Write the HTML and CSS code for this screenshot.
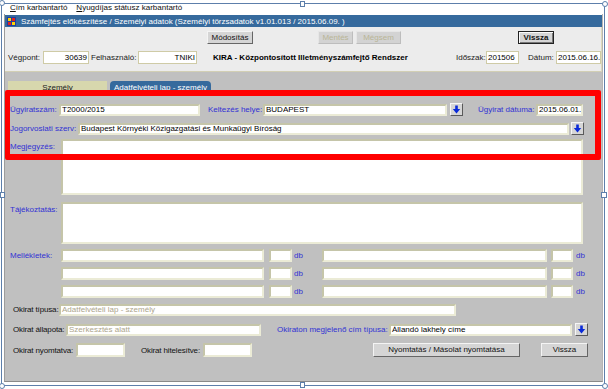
FILE: index.html
```html
<!DOCTYPE html>
<html lang="hu">
<head>
<meta charset="utf-8">
<title>KIRA</title>
<link rel="stylesheet" href="styles.css">
</head>
<body>
<div class="menu"><span><u>C</u>ím karbantartó</span><span><u>N</u>yugdíjas státusz karbantartó</span></div>
<div class="window">
  <div class="titlebar">
    <svg class="ticon" width="9" height="9" viewBox="0 0 9 9"><rect x="0" y="0" width="9" height="9" fill="#1f3f9f"/><rect x="1" y="1" width="3" height="3" fill="#ffd400"/><rect x="5" y="1" width="3" height="3" fill="#e02020"/><rect x="1" y="5" width="3" height="3" fill="#e02020"/><rect x="5" y="5" width="3" height="3" fill="#ffd400"/></svg>
    <span>Számfejtés előkészítése / Személyi adatok (Személyi törzsadatok v1.01.013 / 2015.06.09. )</span>
  </div>
  <div class="toolbar">
    <div class="btnrow">
      <div class="btn b-mod">Módosítás</div>
      <div class="btn dis b-ment">Mentés</div>
      <div class="btn dis b-megs">Mégsem</div>
      <div class="btn focus b-vissza">Vissza</div>
    </div>
    <div class="inforow">
      <div class="tl l-veg">Végpont:</div>
      <div class="tin r w46">30639</div>
      <div class="tl l-felh">Felhasználó:</div>
      <div class="tin r w59">TNIKI</div>
      <div class="kira">KIRA - Központosított Illetményszámfejtő Rendszer</div>
      <div class="tl l-idosz">Időszak:</div>
      <div class="tin w33">201506</div>
      <div class="tl l-datum">Dátum:</div>
      <div class="tin w45">2015.06.16.</div>
    </div>
  </div>
  <div class="content">
    <div class="tabs">
      <div class="tab tab-szem">Személy</div>
      <div class="tab tab-act">Adatfelvételi lap - személy</div>
    </div>
    <div class="form">
      <div class="row r1">
        <div class="lb w49">Ügyiratszám:</div>
        <div class="in w141">T2000/2015</div>
        <div class="lb ml8 w55">Keltezés helye:</div>
        <div class="in w184">BUDAPEST</div>
        <div class="dd ml3"><svg width="9" height="9" viewBox="0 0 9 9"><rect x="3.2" y="0.5" width="2.6" height="4" fill="#0a2ad8"/><polygon points="0.8,4 8.2,4 4.5,8.6" fill="#0a2ad8"/></svg></div>
        <div class="lb ml15 w58">Ügyirat dátuma:</div>
        <div class="in w47">2015.06.01.</div>
      </div>
      <div class="row r2">
        <div class="lb w68">Jogorvoslati szerv:</div>
        <div class="in w491">Budapest Környéki Közigazgatási és Munkaügyi Bíróság</div>
        <div class="dd ml2"><svg width="9" height="9" viewBox="0 0 9 9"><rect x="3.2" y="0.5" width="2.6" height="4" fill="#0a2ad8"/><polygon points="0.8,4 8.2,4 4.5,8.6" fill="#0a2ad8"/></svg></div>
      </div>
      <div class="row memo m1">
        <div class="lb w51 top">Megjegyzés:</div>
        <div class="in area w522"></div>
      </div>
      <div class="row memo m2">
        <div class="lb w51 top">Tájékoztatás:</div>
        <div class="in area w522"></div>
      </div>
      <div class="row mell">
        <div class="lb w51">Mellékletek:</div>
        <div class="in w203"></div>
        <div class="in ml5 w23"></div>
        <div class="db w30">db</div>
        <div class="in w225"></div>
        <div class="in ml4 w22"></div>
        <div class="db db2">db</div>
      </div>
      <div class="row mell">
        <div class="w51"></div>
        <div class="in w203"></div>
        <div class="in ml5 w23"></div>
        <div class="db w30">db</div>
        <div class="in w225"></div>
        <div class="in ml4 w22"></div>
        <div class="db db2">db</div>
      </div>
      <div class="row mell">
        <div class="w51"></div>
        <div class="in w203"></div>
        <div class="in ml5 w23"></div>
        <div class="db w30">db</div>
        <div class="in w225"></div>
        <div class="in ml4 w22"></div>
        <div class="db db2">db</div>
      </div>
      <div class="row r-tip">
        <div class="bl w49">Okirat típusa:</div>
        <div class="in grey w397">Adatfelvételi lap - személy</div>
      </div>
      <div class="row r-all">
        <div class="bl w56">Okirat állapota:</div>
        <div class="in grey w195">Szerkesztés alatt</div>
        <div class="lb ml16 w112">Okiraton megjelenő cím típusa:</div>
        <div class="in w183">Állandó lakhely címe</div>
        <div class="dd ml3"><svg width="9" height="9" viewBox="0 0 9 9"><rect x="3.2" y="0.5" width="2.6" height="4" fill="#0a2ad8"/><polygon points="0.8,4 8.2,4 4.5,8.6" fill="#0a2ad8"/></svg></div>
      </div>
      <div class="row r-ny">
        <div class="bl w66">Okirat nyomtatva:</div>
        <div class="in w49"></div>
        <div class="bl ml13 w65">Okirat hitelesítve:</div>
        <div class="in w49"></div>
        <div class="btn b-nyomt">Nyomtatás / Másolat nyomtatása</div>
        <div class="btn b-vissza2">Vissza</div>
      </div>
    </div>
  </div>
</div>
<div class="sel">
  <span class="hd h-tm"></span>
  <span class="hd h-lm"></span>
  <span class="hd h-rm"></span>
  <span class="hd h-bm"></span>
  <span class="cr c-tl"></span>
  <span class="cr c-tr"></span>
  <span class="cr c-bl"></span>
  <span class="cr c-br"></span>
</div>
<div class="redbox"></div>
</body>
</html>
```

FILE: styles.css
```css
* { box-sizing: border-box; }
html, body { margin: 0; padding: 0; }
body {
  width: 608px;
  height: 389px;
  overflow: hidden;
  background: #ffffff;
  font-family: "Liberation Sans", Arial, sans-serif;
  font-size: 8px;
  color: #000;
  position: relative;
}

/* menu */
.menu {
  height: 14px;
  padding: 3px 0 0 10px;
  display: flex;
  gap: 9px;
  line-height: 9px;
  color: #111;
}
.menu u { text-decoration: underline; }

/* window */
.window {
  margin-left: 4px;
  width: 599px;
  height: 368px;
  border-left: 1px solid #9c9c9c;
  border-right: 1px solid #b4b4b4;
  border-bottom: 1px solid #8a8a8a;
  padding-top: 1px;
  display: flex;
  flex-direction: column;
}
.titlebar {
  height: 12px;
  background: #366a9d;
  color: #fff;
  display: flex;
  align-items: center;
  padding-left: 2px;
  white-space: nowrap;
}
.ticon { margin-right: 5px; flex: none; }

.toolbar {
  height: 45px;
  background: #ececec;
  border-right: 1px solid #ddd9bc;
  border-bottom: 1px solid #d2cfb4;
}
.btnrow {
  margin-top: 4px;
  height: 13px;
  display: flex;
}
.btn {
  height: 13px;
  background: #d5d5d5;
  border: 1px solid;
  border-color: #f4f4f4 #666 #666 #f4f4f4;
  text-align: center;
  line-height: 11px;
  white-space: nowrap;
  color: #111;
  flex: none;
}
.btn.dis {
  color: #b9b596;
  background: #d3d3d3;
  border-color: #e6e6e6 #bdbdbd #bdbdbd #e6e6e6;
}
.btn.focus {
  border: 1px solid #222;
  box-shadow: inset 1px 1px 0 #fafafa, inset -1px -1px 0 #777;
  line-height: 11px;
  font-weight: bold;
}
.b-mod { margin-left: 202px; width: 46px; }
.b-ment { margin-left: 65px; width: 35px; }
.b-megs { margin-left: 3px; width: 45px; }
.b-vissza { margin-left: 117px; width: 36px; }

.inforow {
  margin-top: 7px;
  height: 13px;
  display: flex;
  align-items: center;
}
.tl { color: #222; white-space: nowrap; flex: none; }
.l-veg { margin-left: 3px; width: 35px; }
.l-felh { margin-left: 2px; width: 47px; }
.l-idosz { width: 30px; }
.l-datum { margin-left: 9px; width: 28px; }
.tin {
  height: 13px;
  background: #fff;
  border: 1px solid #cfcba6;
  line-height: 11px;
  padding: 0 1px;
  white-space: nowrap;
  overflow: hidden;
  flex: none;
}
.tin.r { text-align: right; }
.kira {
  margin-left: 16px;
  width: 243px;
  font-weight: bold;
  white-space: nowrap;
  flex: none;
}

/* content */
.content {
  flex: 1;
  background: #c0c0c0;
  padding-top: 9px;
}
.tabs {
  height: 14px;
  display: flex;
}
.tab {
  height: 14px;
  text-align: center;
  line-height: 13px;
  white-space: nowrap;
  flex: none;
}
.tab-szem {
  margin-left: 3px;
  width: 99px;
  background: #d7d7ad;
  color: #222;
}
.tab-act {
  margin-left: 3px;
  width: 101px;
  background: #366a9d;
  color: #fff;
  border-radius: 4px 4px 0 0;
}

.form { padding-left: 5px; }
.row {
  display: flex;
  align-items: center;
  height: 13px;
}
.r1 { margin-top: 8px; }
.r2 { margin-top: 6px; }
.memo { align-items: flex-start; }
.m1 { margin-top: 4px; height: 56px; }
.m2 { margin-top: 7px; height: 42px; }
.mell { margin-top: 5px; height: 13px; }
.r-tip { margin-top: 5px; }
.r-all { margin-top: 7px; }
.r-ny { margin-top: 7px; height: 14px; }

.lb {
  color: #3232d4;
  white-space: nowrap;
  flex: none;
}
.lb.top { padding-top: 3px; }
.bl {
  color: #111;
  white-space: nowrap;
  flex: none;
  padding-left: 3px;
  letter-spacing: -0.15px;
}
.in {
  height: 12px;
  background: #fff;
  border: 2px solid;
  border-color: #c5c5a9 #ebebd6 #ebebd6 #c5c5a9;
  line-height: 8px;
  padding: 0 1px;
  white-space: nowrap;
  overflow: hidden;
  flex: none;
  color: #000;
}
.mell .in { height: 13px; }
.r-ny .in { height: 14px; }
.in.area { height: 100%; }
.in.grey { color: #aca58b; }

.dd {
  width: 13px;
  height: 13px;
  background: #d6d6d6;
  border: 1px solid;
  border-color: #f6f6f6 #5a5a5a #5a5a5a #f6f6f6;
  display: flex;
  align-items: center;
  justify-content: center;
  flex: none;
}
.db {
  color: #3232d4;
  flex: none;
  padding-left: 2px;
}
.db2 { padding-left: 3px; }

.b-nyomt { margin-left: 121px; width: 147px; height: 14px; line-height: 12px; }
.b-vissza2 { margin-left: 21px; width: 47px; height: 14px; line-height: 12px; }

/* widths / margins */
.w22 { width: 22px; } .w23 { width: 23px; } .w30 { width: 30px; }
.w33 { width: 33px; } .w45 { width: 45px; } .w46 { width: 46px; }
.w47 { width: 47px; } .w49 { width: 49px; } .w51 { width: 51px; }
.w55 { width: 55px; } .w56 { width: 56px; } .w58 { width: 58px; }
.w59 { width: 59px; } .w65 { width: 65px; } .w66 { width: 66px; }
.w68 { width: 68px; }
.w112 { width: 112px; } .w141 { width: 141px; } .w183 { width: 183px; }
.w184 { width: 184px; } .w195 { width: 195px; } .w203 { width: 203px; }
.w225 { width: 225px; } .w397 { width: 397px; } .w491 { width: 491px; }
.w522 { width: 522px; }
.ml2 { margin-left: 2px; } .ml3 { margin-left: 3px; } .ml4 { margin-left: 4px; }
.ml5 { margin-left: 5px; } .ml8 { margin-left: 8px; } .ml13 { margin-left: 13px; }
.ml15 { margin-left: 15px; } .ml16 { margin-left: 16px; }

/* selection frame overlay */
.sel {
  position: absolute;
  left: 1px;
  top: 3px;
  width: 604px;
  height: 383px;
  border: 1px solid #5d7fab;
  pointer-events: none;
}
.hd {
  position: absolute;
  width: 5px;
  height: 6px;
  background: #fff;
  border: 1px solid #5d7fab;
}
.h-tm { left: 298px; top: -3px; }
.h-bm { left: 298px; bottom: -3px; }
.h-lm { left: -2px; top: 188px; }
.h-rm { right: -3px; top: 188px; width: 6px; }
.cr {
  position: absolute;
  width: 6px;
  height: 6px;
  background: #fff;
  border: 1px solid #5d7fab;
  border-radius: 50%;
}
.c-tl { left: -3px; top: -4px; }
.c-tr { right: -4px; top: -3px; }
.c-bl { left: -3px; bottom: -4px; }
.c-br { right: -4px; bottom: -4px; }

/* red highlight overlay */
.redbox {
  position: absolute;
  left: 5px;
  top: 90px;
  width: 596px;
  height: 70px;
  border: 6px solid #ff0000;
  border-left-width: 5px;
  border-radius: 2px;
  pointer-events: none;
}
```
